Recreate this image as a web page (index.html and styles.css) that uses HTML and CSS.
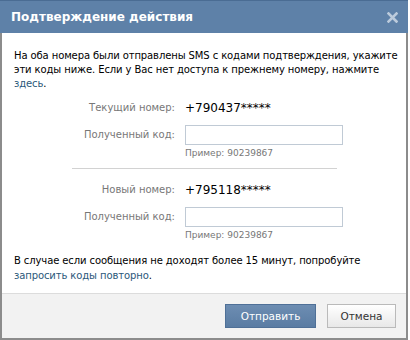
FILE: index.html
```html
<!DOCTYPE html>
<html lang="ru">
<head>
<meta charset="utf-8">
<link rel="stylesheet" href="styles.css">
</head>
<body>
<div class="box">
  <div class="box-header">
    <span class="box-title">Подтверждение действия</span>
    <span class="box-close" aria-label="Закрыть">
      <svg width="11" height="11" viewBox="0 0 11 11"><path d="M1.5 1.5 L9.5 9.5 M9.5 1.5 L1.5 9.5" stroke="#bccbdc" stroke-width="2.6" stroke-linecap="square"/></svg>
    </span>
  </div>
  <div class="box-body">
    <p class="info">На оба номера были отправлены SMS с кодами подтверждения, укажите<br>эти коды ниже. Если у Вас нет доступа к прежнему номеру, нажмите<br><a href="#">здесь</a>.</p>
    <div class="form">
      <div class="row">
        <div class="label">Текущий номер:</div>
        <div class="value">+790437*****</div>
      </div>
      <div class="row row-input">
        <div class="label">Полученный код:</div>
        <div class="field"><input type="text" class="code"></div>
      </div>
      <div class="row row-hint">
        <div></div>
        <div class="hint">Пример: 90239867</div>
      </div>
      <div class="sep"></div>
      <div class="row">
        <div class="label">Новый номер:</div>
        <div class="value">+795118*****</div>
      </div>
      <div class="row row-input">
        <div class="label">Полученный код:</div>
        <div class="field"><input type="text" class="code"></div>
      </div>
      <div class="row row-hint">
        <div></div>
        <div class="hint">Пример: 90239867</div>
      </div>
    </div>
    <p class="info info-bottom">В случае если сообщения не доходят более 15 минут, попробуйте<br><a href="#">запросить коды повторно</a>.</p>
  </div>
  <div class="box-footer">
    <button class="btn btn-blue">Отправить</button>
    <button class="btn btn-gray">Отмена</button>
  </div>
</div>
</body>
</html>
```

FILE: styles.css
```css
html, body {
  margin: 0;
  padding: 0;
}
body {
  width: 410px;
  height: 340px;
  background: #fff;
  font-family: "DejaVu Sans", sans-serif;
  font-size: 10px;
  color: #000;
  overflow: hidden;
}
.box {
  width: 408px;
  height: 340px;
  box-sizing: border-box;
  border-left: 2px solid #8c8c8c;
  border-right: 2px solid #8c8c8c;
  border-bottom: 2px solid #8c8c8c;
  display: flex;
  flex-direction: column;
}
.box-header {
  height: 33px;
  flex: none;
  background: #5e81a8;
  border-top: 1px solid #4a6c93;
  box-sizing: border-box;
  display: flex;
  align-items: center;
  justify-content: space-between;
  padding: 0 9px 0 11px;
  margin: 0 -2px;
}
.box-title {
  color: #fff;
  font-weight: bold;
  font-size: 12px;
}
.box-close {
  display: flex;
  width: 11px;
  height: 11px;
  margin-right: 1px;
}
.box-body {
  flex: 1;
  padding: 16px 4px 0 12px;
}
.info {
  margin: 0;
  line-height: 14px;
  white-space: nowrap;
  letter-spacing: -0.1px;
}
a {
  color: #2b587a;
  text-decoration: none;
}
.form {
  margin-top: 10px;
}
.row {
  display: grid;
  grid-template-columns: 161px 158px;
  column-gap: 10px;
  align-items: center;
}
.label {
  text-align: right;
  color: #777;
  line-height: 14px;
}
.value {
  font-size: 12px;
  line-height: 14px;
}
.row-input {
  margin-top: 10px;
}
.field {
  display: flex;
}
.code {
  width: 158px;
  height: 20px;
  box-sizing: border-box;
  border: 1px solid #c0cad5;
  margin: 0;
  padding: 0 3px;
  background: #fff;
}
.row-hint {
  margin-top: 2px;
}
.hint {
  color: #777;
  font-size: 9px;
  line-height: 12px;
}
.sep {
  height: 1px;
  background: #d2d2d2;
  margin: 9px 65px 14px 58px;
}
.info-bottom {
  margin-top: 12px;
  line-height: 15px;
}
.box-footer {
  height: 45px;
  flex: none;
  background: #f2f2f2;
  border-top: 1px solid #dcdcdc;
  box-sizing: border-box;
  display: flex;
  justify-content: flex-end;
  align-items: center;
  gap: 11px;
  padding: 0 10px 0 0;
}
.btn {
  height: 24px;
  font-family: "DejaVu Sans", sans-serif;
  font-size: 10.5px;
  box-sizing: border-box;
  margin: 0;
  padding: 0;
  cursor: pointer;
}
.btn-blue {
  width: 91px;
  color: #fff;
  background: linear-gradient(#6d8db2, #5a7ca3);
  border: 1px solid #4f7097;
}
.btn-gray {
  width: 69px;
  color: #333;
  background: linear-gradient(#ffffff, #e8e8e8);
  border: 1px solid #bababa;
}
```
